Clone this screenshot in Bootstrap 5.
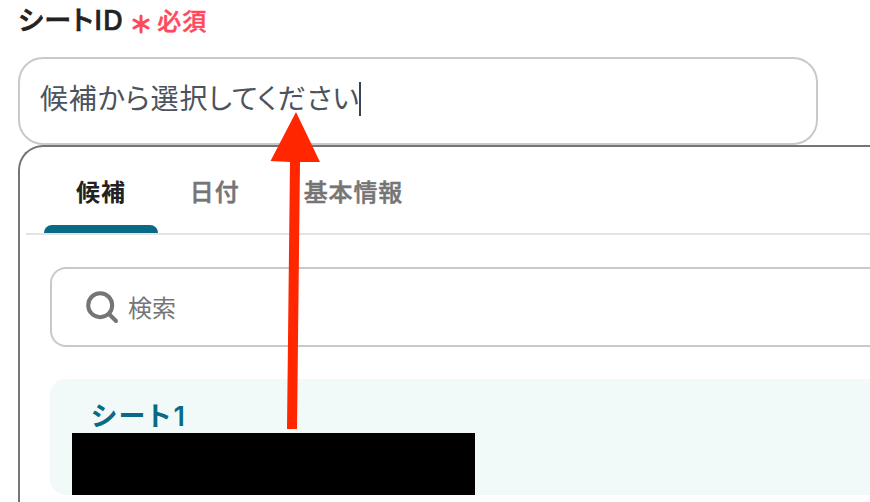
<!DOCTYPE html>
<html lang="ja">
<head>
    <meta charset="UTF-8">
    <meta name="viewport" content="width=device-width, initial-scale=1.0">
    <title>シートID</title>

    <!-- Bootstrap CSS -->
    <link href="https://cdn.jsdelivr.net/npm/bootstrap@5.3.0/dist/css/bootstrap.min.css" rel="stylesheet">

    <style>
        body {
            height: 502px;
            padding-left: 18px;
            font-family: Inter, "Noto Sans CJK JP", sans-serif;
            font-feature-settings: "palt";
            color: #222;
        }

        .field-label {
            height: 57px;
            padding-top: 2px;
            font-size: 27px;
            line-height: 36px;
            font-weight: 500;
        }

        .label-text {
            padding-top: 1px;
            letter-spacing: 1.4px;
            -webkit-text-stroke: .7px;
        }

        .required-mark {
            margin: 2px 0 0 8px;
            gap: 7px;
            font-size: 24px;
            line-height: 36px;
            letter-spacing: 1px;
            color: #ff475d;
            -webkit-text-stroke: .5px;
        }

        .sheet-input {
            width: 800px;
            height: 88px;
            padding: 0 20px 4px;
            border: 2px solid #c9c9c9;
            border-radius: 25px;
            font-size: 28px;
            letter-spacing: .8px;
            color: #4b535c;
        }

        .caret {
            width: 2px;
            height: 34px;
            margin-left: -1px;
            background: #3d4650;
        }

        /* The panel is cut off by the right and bottom edges of the window */
        .picker {
            height: 357px;
            border: 2px solid #757575;
            border-width: 2px 0 0 2px;
            border-radius: 25px 0 0 0;
            padding-left: 6px;
        }

        .picker .nav {
            height: 88px;
            padding-left: 18px;
            border-bottom: 2px solid #e4e4e4;
        }

        .picker .nav-link {
            height: 86px;
            padding: 28px 32px 0;
            font-size: 24px;
            line-height: 36px;
            letter-spacing: .9px;
            font-weight: 500;
            color: #757575;
            -webkit-text-stroke: .5px;
        }

        .picker .nav-link.active {
            color: #222;
            font-weight: 700;
            -webkit-text-stroke: 0;
        }

        .picker .nav-link.active::after {
            content: "";
            display: block;
            height: 8px;
            margin: 14px -32px 0;
            border-radius: 8px 8px 0 0;
            background: #086a85;
        }

        .search-box {
            height: 80px;
            margin: 32px 0 32px 24px;
            padding-left: 33px;
            gap: 9px;
            border: 2px solid #c9c9c9;
            border-right: 0;
            border-radius: 16px 0 0 16px;
            font-size: 24px;
            color: #757575;
        }

        .search-text {
            padding-top: 3px;
        }

        .sheet-item {
            height: 116px;
            margin-left: 24px;
            padding: 18px 0 0 22px;
            border-radius: 16px 0 0 16px;
            background: #f2faf9;
        }

        .sheet-name {
            height: 36px;
            padding-left: 19px;
            font-size: 27px;
            line-height: 39px;
            letter-spacing: 2.9px;
            font-weight: 600;
            color: #086a85;
        }

        .redacted {
            width: 403px;
            height: 62px;
            background: #000;
        }

        .arrow {
            position: absolute;
            left: 260px;
            top: 100px;
        }
    </style>
</head>
<body class="overflow-hidden position-relative">
    <label class="field-label d-flex" for="sheet">
        <span class="label-text">シートID</span>
        <span class="required-mark d-flex">
            <svg class="mt-2" width="18" height="22" viewBox="0 0 18 22" fill="none" stroke="#ff475d" stroke-width="3" stroke-linecap="round">
                <path d="M9 4V20M2 8L16 16M16 8L2 16"/>
            </svg>
            <span>必須</span>
        </span>
    </label>

    <div class="sheet-input d-flex align-items-center bg-white" id="sheet">
        <span class="sheet-value">候補から選択してください</span><span class="caret"></span>
    </div>

    <div class="picker bg-white">
        <nav class="nav flex-nowrap">
            <a class="nav-link active" href="#">候補</a>
            <a class="nav-link" href="#">日付</a>
            <a class="nav-link" href="#">基本情報</a>
        </nav>

        <div class="search-box d-flex align-items-center">
            <svg width="34" height="34" viewBox="0 0 34 34" fill="none" stroke="#757575" stroke-width="4" stroke-linecap="round">
                <circle cx="15.2" cy="15.2" r="12"/>
                <path d="M24 24L31 31"/>
            </svg>
            <span class="search-text">検索</span>
        </div>

        <div class="sheet-item">
            <div class="sheet-name">シート1</div>
            <div class="redacted"></div>
        </div>
    </div>

    <!-- Arrow pointing at the input -->
    <svg class="arrow" width="70" height="340" viewBox="260 100 70 340" fill="#ff2600">
        <path d="M296 112L320 162L300 162L297 429L287 429L290 162L270.5 161Z"/>
    </svg>

    <script src="https://cdn.jsdelivr.net/npm/bootstrap@5.3.0/dist/js/bootstrap.bundle.min.js"></script>
</body>
</html>
